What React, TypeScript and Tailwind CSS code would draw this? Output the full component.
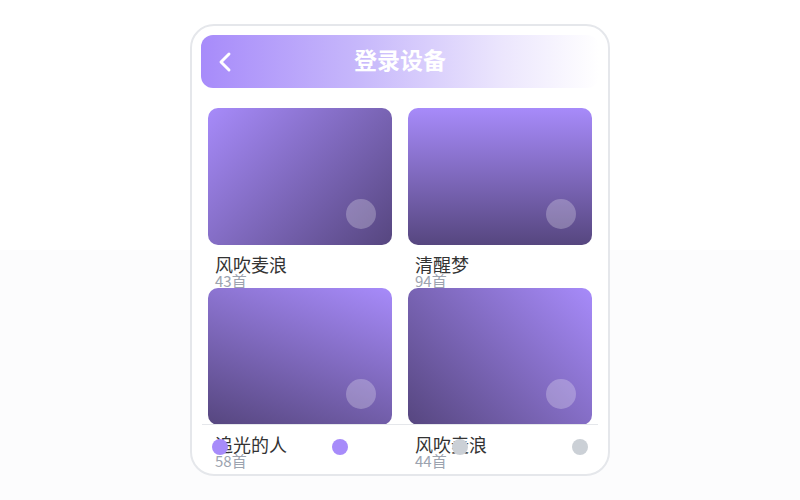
import { ChevronLeft } from 'lucide-react'

const cards = [
  { title: '风吹麦浪', count: '43首', bg: 'bg-[linear-gradient(135deg,#a78bfa_0%,#56467f_100%)]' },
  { title: '清醒梦', count: '94首', bg: 'bg-[linear-gradient(180deg,#a78bfa_0%,#56467f_100%)]' },
  { title: '追光的人', count: '58首', bg: 'bg-[linear-gradient(200deg,#a78bfa_0%,#56467f_100%)]' },
  { title: '风吹麦浪', count: '44首', bg: 'bg-[linear-gradient(225deg,#a78bfa_0%,#56467f_100%)]' },
]

export default function App() {
  return (
    <div
      className="w-[800px] h-[500px] flex items-center justify-center bg-[linear-gradient(to_bottom,#ffffff_50%,#fcfcfd_50%)]"
      style={{ fontFamily: '"Noto Sans CJK SC", "Noto Sans", sans-serif' }}
    >
      {/* ── Phone frame ─────────────────────────────────────────── */}
      <div className="relative w-[420px] h-[452px] rounded-[24px] border-2 border-[#e5e7eb] bg-white overflow-hidden">
        {/* Header */}
        <div className="pl-[9px] pr-[9px] pt-[9px]">
          <div className="relative h-[53px] rounded-[12px] flex items-center justify-center bg-[linear-gradient(90deg,#a78bfa_0%,#c7b8fb_40%,#ebe5fd_75%,#ffffff_100%)]">
            <ChevronLeft className="absolute left-[8px] top-[11px] w-[32px] h-[32px] text-white" strokeWidth={2.2} />
            <span className="text-white text-[23px] leading-[30px] font-bold pb-[5px]">登录设备</span>
          </div>
        </div>

        {/* Playlist grid */}
        <div className="mt-[20px] px-[16px] grid grid-cols-2 gap-x-4">
          {cards.map((c, i) => (
            <div key={i}>
              <div className={`relative h-[137px] rounded-[10px] ${c.bg}`}>
                <div className="absolute right-4 bottom-4 w-[30px] h-[30px] rounded-full bg-white/25" />
              </div>
              <div className="pt-[10px] pl-[7px]">
                <div className="text-[18px] leading-[19px] text-[#333333]">{c.title}</div>
                <div className="text-[15px] leading-[14px] text-[#9ca3af]">{c.count}</div>
              </div>
            </div>
          ))}
        </div>

        {/* Bottom indicator bar */}
        <div className="absolute left-[10px] right-[10px] bottom-[6px] h-[44px] border-t border-[#e5e7eb] flex items-center justify-between px-[10px]">
          <span className="w-4 h-4 rounded-full bg-[#a78bfa]" />
          <span className="w-4 h-4 rounded-full bg-[#a78bfa]" />
          <span className="w-4 h-4 rounded-full bg-[#cbd0d6]" />
          <span className="w-4 h-4 rounded-full bg-[#cbd0d6]" />
        </div>
      </div>
    </div>
  )
}
